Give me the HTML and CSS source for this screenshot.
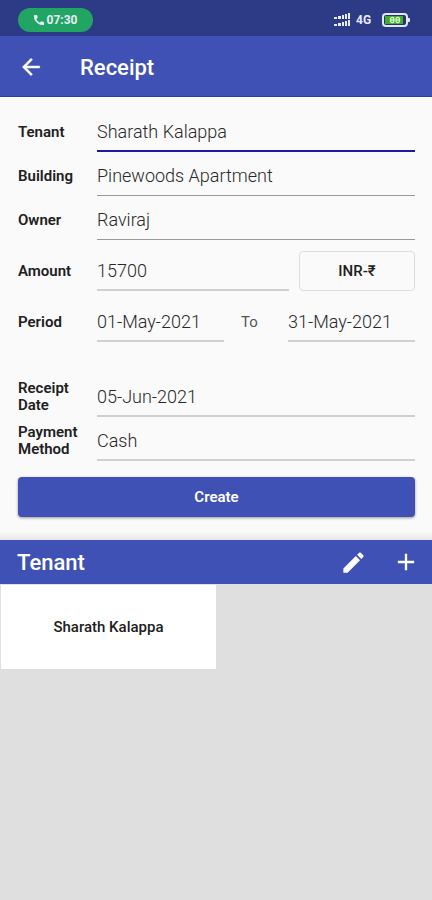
FILE: index.html
```html
<!DOCTYPE html>
<html lang="en">
<head>
<meta charset="utf-8">
<meta name="viewport" content="width=device-width, initial-scale=1">
<title>Receipt</title>
<link rel="stylesheet" href="styles.css">
</head>
<body>
<div class="status-bar">
  <div class="call-pill">
    <svg width="10" height="10" viewBox="3 3 18 18" fill="currentColor" stroke="currentColor" aria-hidden="true"><path d="M6.6 10.8c1.4 2.8 3.800 5.100 6.600 6.600l2.200-2.200c.3-.3.700-.4 1-.2 1.100.4 2.300.6 3.600.6.600 0 1 .4 1 1V20c0 .6-.4 1-1 1C10.600 21 3 13.400 3 4c0-.6.400-1 1-1h3.500c.6 0 1 .4 1 1 0 1.200.2 2.400.6 3.600.1.300 0 .7-.2 1z"/></svg>
    <span>07:30</span>
  </div>
  <div class="status-icons">
    <svg width="17" height="14" viewBox="0 0 17 14" fill="currentColor" aria-hidden="true"><path d="M0 4h3v2H0zM4 3h3v3H4zM8 2h2v4H8zM11 1h2v5h-2zM14 0h2v6h-2zM0 11h3v2H0zM4 10h3v3H4zM8 9h2v4H8zM11 8h2v5h-2zM14 7h2v6h-2z"/></svg>
    <span class="network">4G</span>
    <svg width="28" height="14" viewBox="0 0 28 14" aria-hidden="true"><rect x="1" y="1" width="24" height="12" rx="3" fill="#26336f" stroke="#e3e7fb" stroke-width="2"/><rect x="3" y="3" width="18" height="8" fill="#3fae2c"/><path d="M26 5h1q1 0 1 1v2q0 1-1 1h-1z" fill="#e3e7fb"/><g fill="none" stroke="#d9f5cf" stroke-width="1.300"><rect x="8.500" y="4.500" width="3.500" height="5" rx="1.500"/><path d="M8.500 7H12"/><rect x="14" y="4.500" width="3.500" height="5" rx="1.500"/><path d="M14 7h3.500"/></g></svg>
  </div>
</div>
<header class="app-bar">
  <button class="icon-button" type="button" aria-label="Back">
    <svg width="26" height="26" viewBox="0 0 24 24" fill="currentColor" stroke="currentColor" stroke-width=".4"><path d="M20 11H7.800l5.600-5.600L12 4l-8 8 8 8 1.400-1.400L7.800 13H20z"/></svg>
  </button>
  <h1>Receipt</h1>
</header>
<main>
  <form class="receipt-form">
    <div class="row"><label for="tenant">Tenant</label><input class="active" id="tenant" value="Sharath Kalappa"></div>
    <div class="row"><label for="building">Building</label><input id="building" value="Pinewoods Apartment"></div>
    <div class="row"><label for="owner">Owner</label><input id="owner" value="Raviraj"></div>
    <div class="row spaced"><label for="amount">Amount</label><input class="light" id="amount" value="15700"><button class="currency" type="button">INR-₹</button></div>
    <div class="row spaced"><label for="from">Period</label><input class="light" id="from" value="01-May-2021"><label class="to" for="until">To</label><input class="light" id="until" value="31-May-2021"></div>
    <div class="row section"><label for="date">Receipt Date</label><input class="light" id="date" value="05-Jun-2021"></div>
    <div class="row"><label for="method">Payment Method</label><input class="light" id="method" value="Cash"></div>
    <button class="create" type="button">Create</button>
  </form>
  <section>
    <header class="section-bar">
      <h2>Tenant</h2>
      <button class="icon-button" type="button" aria-label="Edit tenant">
        <svg width="27" height="27" viewBox="0 0 24 24" fill="currentColor"><path d="M3 17.250V21h3.750L17.800 9.900l-3.700-3.700zM20.700 7c.4-.4.400-1 0-1.400l-2.300-2.300c-.4-.4-1-.4-1.400 0l-1.800 1.800 3.700 3.700z"/></svg>
      </button>
      <button class="icon-button" type="button" aria-label="Add tenant">
        <svg width="28" height="28" viewBox="0 0 24 24" fill="currentColor"><path d="M19 13h-6v6h-2v-6H5v-2h6V5h2v6h6z"/></svg>
      </button>
    </header>
    <div class="tenants">
      <div class="tenant-card">Sharath Kalappa</div>
    </div>
  </section>
</main>
</body>
</html>
```
FILE: styles.css
```css
* {
  box-sizing: border-box;
}

body {
  margin: 0;
  min-height: 100vh;
  background: #dfdfdf;
  color: #202020;
  font-family: Roboto, "Noto Sans", sans-serif;
  font-size: 15px;
}

button,
input {
  font: inherit;
  color: inherit;
}

svg {
  display: block;
}

h1,
h2 {
  margin: 0;
  font-size: 22px;
  font-weight: 500;
}

.status-bar {
  display: flex;
  align-items: center;
  justify-content: space-between;
  height: 36px;
  padding: 4px 22px 0 18px;
  background: #2d3a86;
  color: #e8ebfb;
}

.call-pill {
  display: flex;
  align-items: center;
  justify-content: center;
  gap: 3px;
  width: 75px;
  height: 24px;
  border-radius: 12px;
  background: #20a562;
  font-size: 12px;
  font-weight: 700;
}

.status-icons {
  display: flex;
  align-items: center;
  gap: 5px;
}

.network {
  width: 21px;
  font-size: 12px;
  font-weight: 700;
}

.app-bar {
  display: flex;
  align-items: center;
  gap: 36px;
  height: 61px;
  padding: 2px 18px 0;
  border-bottom: 1px solid #2b429c;
  background: #3f51b5;
  color: #fff;
}

.icon-button {
  padding: 0;
  border: 0;
  background: none;
  color: inherit;
}

.receipt-form {
  display: flex;
  flex-direction: column;
  gap: 4px;
  padding: 15px 17px 23px 18px;
  background: linear-gradient(#fafafa calc(100% - 8px), #e6e6e6);
}

.row {
  display: flex;
  align-items: center;
  height: 40px;
}

.row.spaced {
  margin-top: 7px;
}

.row.section {
  margin-top: 31px;
}

label {
  flex: none;
  width: 79px;
  padding-right: 8px;
  font-weight: 600;
  line-height: 17px;
}

label.to {
  width: 64px;
  padding: 0 0 0 17px;
  color: #555;
  font-weight: 400;
}

input {
  flex: 1;
  min-width: 0;
  height: 40px;
  padding: 0;
  border: 0;
  border-bottom: 1px solid #999;
  border-radius: 0;
  outline: 0;
  background: none;
  color: #282828;
  font-size: 18px;
  font-weight: 300;
}

input.active {
  border-bottom: 2px solid #1a1a9c;
}

input.light {
  border-bottom: 2px solid #d0d0d0;
}

.currency {
  width: 116px;
  height: 40px;
  margin-left: 10px;
  border: 1px solid #dedede;
  border-radius: 4px;
  background: none;
  font-weight: 500;
}

.create {
  height: 40px;
  margin-top: 12px;
  border: 0;
  border-radius: 4px;
  background: #3f51b5;
  box-shadow: 0 1px 3px #0006;
  color: #fff;
  font-weight: 600;
}

.section-bar {
  display: flex;
  align-items: center;
  gap: 25px;
  height: 44px;
  padding: 0 12px 0 17px;
  background: #3f51b5;
  color: #fff;
}

.section-bar h2 {
  flex: 1;
}

.tenants {
  display: grid;
  grid-template-columns: 1fr 1fr;
  padding: 1px;
}

.tenant-card {
  display: flex;
  align-items: center;
  justify-content: center;
  height: 84px;
  background: #fff;
  font-weight: 500;
}
```
